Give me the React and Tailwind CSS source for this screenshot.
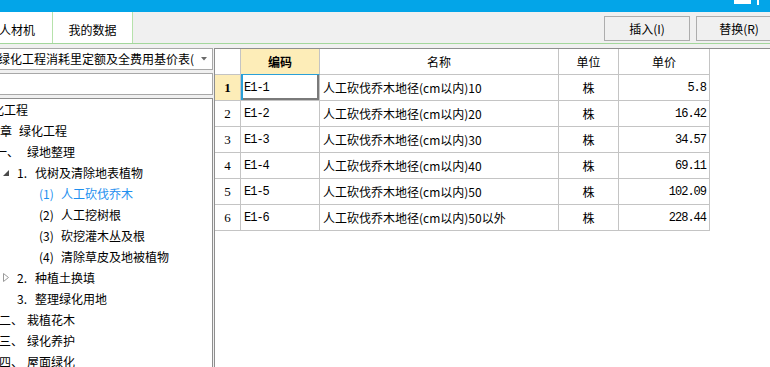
import React from 'react';

const rows = [
  { no: 1, code: 'E1-1', name: '人工砍伐乔木地径(cm以内)10', unit: '株', price: '5.8' },
  { no: 2, code: 'E1-2', name: '人工砍伐乔木地径(cm以内)20', unit: '株', price: '16.42' },
  { no: 3, code: 'E1-3', name: '人工砍伐乔木地径(cm以内)30', unit: '株', price: '34.57' },
  { no: 4, code: 'E1-4', name: '人工砍伐乔木地径(cm以内)40', unit: '株', price: '69.11' },
  { no: 5, code: 'E1-5', name: '人工砍伐乔木地径(cm以内)50', unit: '株', price: '102.09' },
  { no: 6, code: 'E1-6', name: '人工砍伐乔木地径(cm以内)50以外', unit: '株', price: '228.44' },
];

const OpenTri = () => (
  <svg width="6" height="6" viewBox="0 0 6 6">
    <polygon points="6,0 6,6 0,6" fill="#4a4a4a" />
  </svg>
);

const ClosedTri = () => (
  <svg width="6" height="9" viewBox="0 0 6 9">
    <polygon points="0.5,0.5 5.5,4.5 0.5,8.5" fill="none" stroke="#9a9a9a" />
  </svg>
);

// 各行: [x座標, 内容]
const tree = [
  { parts: [[-20, '绿化工程']] },
  { parts: [[-24, '第一章'], [19, '绿化工程']] },
  { parts: [[-5, '一、'], [27, '绿地整理']] },
  { parts: [[3, <OpenTri />], [17, '1.'], [35, '伐树及清除地表植物']] },
  { active: true, parts: [[39, '(1)'], [61, '人工砍伐乔木']] },
  { parts: [[39, '(2)'], [61, '人工挖树根']] },
  { parts: [[39, '(3)'], [61, '砍挖灌木丛及根']] },
  { parts: [[39, '(4)'], [61, '清除草皮及地被植物']] },
  { parts: [[3, <ClosedTri />], [17, '2.'], [35, '种植土换填']] },
  { parts: [[17, '3.'], [35, '整理绿化用地']] },
  { parts: [[-1, '二、'], [27, '栽植花木']] },
  { parts: [[-1, '三、'], [27, '绿化养护']] },
  { parts: [[-1, '四、'], [27, '屋面绿化']] },
];

const TreeRow = ({ item }) => (
  <div className={`flex items-center h-[21px] ml-[-30px] shrink-0 whitespace-nowrap ${item.active ? 'text-[#1e8fef]' : 'text-black'}`}>
    <span style={{ width: item.parts[0][0] + 30 }} className="shrink-0" />
    {item.parts.map(([x, content], i) => {
      const next = item.parts[i + 1];
      return (
        <span key={i} className="shrink-0 flex items-center" style={next ? { width: next[0] - x } : undefined}>
          {content}
        </span>
      );
    })}
  </div>
);

const cell = 'border-r border-b border-[#c4c4c4] flex items-center shrink-0';
const mono = "font-['Liberation_Mono',monospace] text-[12px] tracking-[-1px]";

export default function App() {
  return (
    <div className="w-[770px] h-[367px] overflow-hidden bg-[#f0f0f0] flex flex-col text-[12px] text-black font-['Noto_Sans_CJK_SC','Noto_Sans',sans-serif]">
      {/* タイトルバー */}
      <div className="h-[12px] shrink-0 bg-[#03a5e8] flex justify-end items-start pr-[11px] gap-[6px]">
        <div className="w-[17px] h-[4px] bg-white" />
        <div className="w-[2px] h-[5px] bg-white" />
      </div>

      {/* タブ + ボタン */}
      <div className="h-[32px] shrink-0 flex border-b border-[#a3d79c] overflow-hidden">
        <div className="ml-[-18px] w-[71px] bg-white border-r border-[#b6e2ab] flex items-center justify-center pt-[5px]">人材机</div>
        <div className="w-[80px] bg-white border-r border-[#b6e2ab] flex items-center justify-center pt-[5px]">我的数据</div>
        <div className="ml-auto mr-[-12px] flex gap-[6px] pt-[4px]">
          <button className="w-[86px] h-[25px] bg-[#f0f0f0] border border-[#adadad] flex items-center justify-center">插入(I)</button>
          <button className="w-[86px] h-[25px] bg-[#f0f0f0] border border-[#adadad] flex items-center justify-center">替换(R)</button>
        </div>
      </div>

      <div className="flex-1 flex min-h-0">
        {/* 左パネル */}
        <div className="w-[213px] shrink-0 flex flex-col pt-[4px] overflow-hidden">
          <div className="h-[22px] shrink-0 ml-[-10px] border border-[#a8a8a8] bg-white flex items-center pl-[7px] pr-[5px] whitespace-nowrap">
            <span className="flex-1 overflow-hidden">绿化工程消耗里定额及全费用基价表(</span>
            <svg width="6" height="4" viewBox="0 0 6 4" className="ml-[4px] shrink-0">
              <polygon points="0,0 6,0 3,3.5" fill="#6a6a6a" />
            </svg>
          </div>
          <div className="h-[22px] shrink-0 mt-[3px] ml-[-10px] border border-[#a8a8a8] bg-white" />
          <div className="flex-1 mt-[3px] bg-white border-t border-r border-[#8e8e8e] flex flex-col overflow-hidden">
            {tree.map((item, i) => (
              <TreeRow key={i} item={item} />
            ))}
          </div>
        </div>

        {/* グリッド */}
        <div className="flex-1 mt-[4px] ml-[1px] bg-white border-l border-t border-[#8e8e8e] flex flex-col">
          <div className="flex h-[26px]">
            <div className={`${cell} w-[26px]`} />
            <div className={`${cell} w-[79px] justify-center bg-[#fdedb8] font-bold border-b-[#2aa0d8]`}>编码</div>
            <div className={`${cell} w-[239px] justify-center`}>名称</div>
            <div className={`${cell} w-[60px] justify-center`}>单位</div>
            <div className={`${cell} w-[91px] justify-center`}>单价</div>
          </div>
          {rows.map((r) => (
            <div key={r.no} className="flex h-[26px]">
              <div className={`${cell} w-[26px] justify-center font-['Liberation_Serif',serif] text-[13px] ${r.no === 1 ? 'bg-[#fdedb8] font-bold' : ''}`}>{r.no}</div>
              <div className={`${cell} w-[79px] pl-[3px] ${mono} ${r.no === 1 ? 'shadow-[inset_2px_0_0_#2aa0d8,inset_-2px_0_0_#7a7a7a,inset_0_-2px_0_#7a7a7a]' : ''}`}>{r.code}</div>
              <div className={`${cell} w-[239px] pl-[3px] whitespace-nowrap`}>{r.name}</div>
              <div className={`${cell} w-[60px] justify-center`}>{r.unit}</div>
              <div className={`${cell} w-[91px] justify-end pr-[3px] ${mono}`}>{r.price}</div>
            </div>
          ))}
        </div>
      </div>
    </div>
  );
}
